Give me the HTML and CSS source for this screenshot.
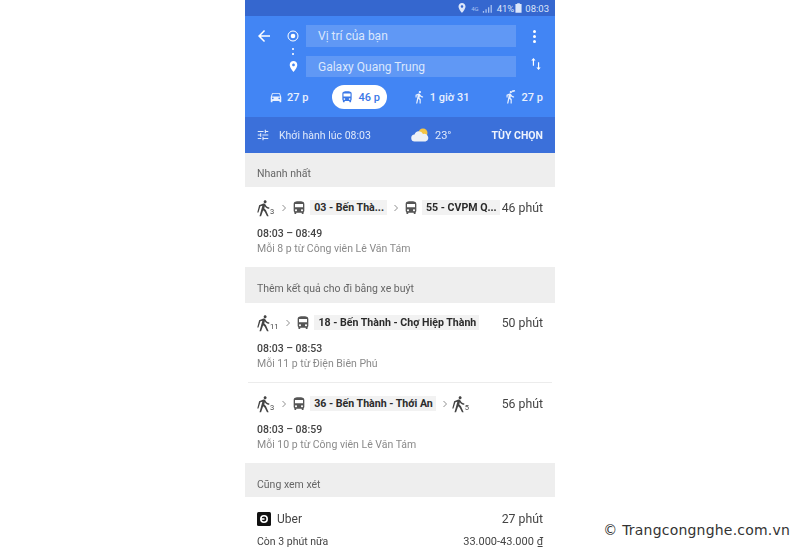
FILE: index.html
```html
<!DOCTYPE html>
<html lang="vi">
<head>
  <meta charset="UTF-8" />
  <title>Trang chỉ đường</title>
  <link rel="stylesheet" href="styles.css">
</head>
<body>

<svg class="defs" width="0" height="0">
  <symbol id="car" viewBox="0 0 24 24"><path d="M18.92 6.01C18.72 5.42 18.16 5 17.5 5h-11c-.66 0-1.21.42-1.42 1.01L3 12v8c0 .55.45 1 1 1h1c.55 0 1-.45 1-1v-1h12v1c0 .55.45 1 1 1h1c.55 0 1-.45 1-1v-8l-2.08-5.99zM6.5 16c-.83 0-1.5-.67-1.5-1.5S5.67 13 6.5 13s1.5.67 1.5 1.5S7.33 16 6.5 16zm11 0c-.83 0-1.5-.67-1.5-1.5s.67-1.5 1.5-1.5 1.5.67 1.5 1.5-.67 1.5-1.5 1.5zM5 11l1.500-4.500h11L19 11H5z"/></symbol>
  <symbol id="bus" viewBox="0 0 24 24"><path d="M4 16c0 .88.39 1.67 1 2.22V20c0 .55.45 1 1 1h1c.55 0 1-.45 1-1v-1h8v1c0 .55.45 1 1 1h1c.55 0 1-.45 1-1v-1.78c.61-.55 1-1.34 1-2.22V6c0-3.5-3.58-4-8-4s-8 .5-8 4v10zm3.500 1c-.83 0-1.500-.67-1.500-1.500S6.670 14 7.500 14s1.500.67 1.500 1.500S8.330 17 7.500 17zm9 0c-.83 0-1.500-.67-1.500-1.500s.67-1.500 1.500-1.500 1.500.67 1.500 1.500-.67 1.500-1.500 1.500zm1.500-6H6V6h12v5z"/></symbol>
  <symbol id="walk" viewBox="0 0 24 24"><path d="M13.5 5.5c1.1 0 2-.9 2-2s-.9-2-2-2-2 .9-2 2 .9 2 2 2zM9.800 8.900L7 23h2.100l1.800-8 2.100 2v6h2v-7.500l-2.100-2 .6-3C14.800 12 16.800 13 19 13v-2c-1.900 0-3.500-1-4.300-2.400l-1-1.600c-.4-.6-1-1-1.700-1-.3 0-.5.1-.8.1L6 8.300V13h2V9.600l1.800-.7"/></symbol>
  <symbol id="hike" viewBox="0 0 24 24"><path d="M13.5 5.500c1.100 0 2-.9 2-2s-.9-2-2-2-2 .9-2 2 .9 2 2 2zM9.800 8.900L6 23h2.100l2.800-8 2.100 2 3 6h2.200l-3.700-8.500-2.100-2 .6-3C14.800 12 16.800 13 19 13v-2c-1.900 0-3.500-1-4.300-2.400l-1-1.600c-.4-.6-1-1-1.700-1-.3 0-.5.1-.8.1L5.500 8.300 3 18h1.600l2.600-8.400 2.600-.7"/></symbol>
  <symbol id="place" viewBox="0 0 24 24"><path d="M12 2C8.130 2 5 5.130 5 9c0 5.250 7 13 7 13s7-7.750 7-13c0-3.870-3.130-7-7-7zm0 9.500c-1.380 0-2.500-1.120-2.500-2.500s1.120-2.500 2.500-2.500 2.500 1.120 2.500 2.500-1.120 2.500-2.500 2.500z"/></symbol>
  <symbol id="chevron" viewBox="0 0 8 10"><path d="M2 1l4 4-4 4" fill="none" stroke="currentColor" stroke-width="1.100"/></symbol>
</svg>

<div class="phone">
  <div class="statusbar">
    <svg class="ic-status" viewBox="0 0 24 24"><use href="#place"/></svg>
    <span class="net">4G</span>
    <svg class="signal" viewBox="0 0 14 10"><path d="M1 10h1.500V8H1zM4 10h1.500V6H4zM7 10h1.500V3.500H7zM10 10h1.500V1H10z"/></svg>
    <span>41%</span>
    <svg class="battery" viewBox="0 0 8 11"><path d="M2.500 0h3v1H7.500v10H.5V1h2z"/></svg>
    <span>08:03</span>
  </div>

  <div class="header">
    <div class="search-row">
      <svg class="back" viewBox="0 0 24 24"><path d="M20 11H7.830l5.590-5.590L12 4l-8 8 8 8 1.410-1.410L7.830 13H20v-2z"/></svg>
      <div class="marker">
        <svg class="origin" viewBox="0 0 12 12"><circle cx="6" cy="6" r="5" fill="none" stroke="#fff" stroke-width="1"/><circle cx="6" cy="6" r="2.300" fill="#fff"/></svg>
      </div>
      <div class="field">Vị trí của bạn</div>
      <div class="dots"><i></i><i></i><i></i></div>
    </div>
    <div class="connector"><i></i><i></i></div>
    <div class="search-row second">
      <div class="back-space"></div>
      <div class="marker">
        <svg class="pin" viewBox="0 0 24 24"><use href="#place"/></svg>
      </div>
      <div class="field">Galaxy Quang Trung</div>
      <svg class="swap" viewBox="0 0 14 16"><path d="M4 1L1.500 4H3.300v6h1.400V4H6.500zM10 15l2.500-3H10.700V6H9.300v6H7.500z"/></svg>
    </div>
    <div class="modes">
      <div class="mode m-car"><svg viewBox="0 0 24 24"><use href="#car"/></svg>27 p</div>
      <div class="mode m-bus active"><svg viewBox="0 0 24 24"><use href="#bus"/></svg>46 p</div>
      <div class="mode m-walk"><svg viewBox="0 0 24 24"><use href="#walk"/></svg>1 giờ 31</div>
      <div class="mode m-hail"><svg viewBox="0 0 24 24"><use href="#walk"/><path d="M15 1l5-1 1 2-5 2z"/></svg>27 p</div>
    </div>
  </div>

  <div class="depart">
    <svg class="tune" viewBox="0 0 24 24"><path d="M3 17v2h6v-2H3zM3 5v2h10V5H3zm10 16v-2h8v-2h-8v-2h-2v6h2zM7 9v2H3v2h4v2h2V9H7zm14 4v-2H11v2h10zm-6-4h2V7h4V5h-4V3h-2v6z"/></svg>
    <span class="depart-text">Khởi hành lúc 08:03</span>
    <svg class="weather" viewBox="0 0 18 14"><circle cx="12" cy="5" r="4.500" fill="#f6c544"/><path d="M4 13.500a3.500 3.500 0 0 1-.5-7A4.500 4.500 0 0 1 12 6a3.800 3.800 0 0 1 2.500 7.500z" fill="#eef1f6"/></svg>
    <span class="temp">23°</span>
    <span class="options">TÙY CHỌN</span>
  </div>

  <div class="label">Nhanh nhất</div>
  <div class="result">
    <div class="route">
      <svg class="ic-walk" viewBox="0 0 24 24"><use href="#hike"/></svg><sub>3</sub>
      <svg class="chev" viewBox="0 0 8 10"><use href="#chevron"/></svg>
      <svg class="ic-bus" viewBox="0 0 24 24"><use href="#bus"/></svg>
      <span class="line">03 - Bến Thà...</span>
      <svg class="chev" viewBox="0 0 8 10"><use href="#chevron"/></svg>
      <svg class="ic-bus" viewBox="0 0 24 24"><use href="#bus"/></svg>
      <span class="line last">55 - CVPM Q...</span>
      <span class="duration">46 phút</span>
    </div>
    <div class="times">08:03 – 08:49</div>
    <div class="freq">Mỗi 8 p từ Công viên Lê Văn Tám</div>
  </div>

  <div class="label tall low">Thêm kết quả cho đi bằng xe buýt</div>
  <div class="result divided">
    <div class="route">
      <svg class="ic-walk" viewBox="0 0 24 24"><use href="#hike"/></svg><sub>11</sub>
      <svg class="chev" viewBox="0 0 8 10"><use href="#chevron"/></svg>
      <svg class="ic-bus" viewBox="0 0 24 24"><use href="#bus"/></svg>
      <span class="line">18 - Bến Thành - Chợ Hiệp Thành</span>
      <span class="duration">50 phút</span>
    </div>
    <div class="times">08:03 – 08:53</div>
    <div class="freq">Mỗi 11 p từ Điện Biên Phú</div>
  </div>
  <div class="result">
    <div class="route">
      <svg class="ic-walk" viewBox="0 0 24 24"><use href="#hike"/></svg><sub>3</sub>
      <svg class="chev" viewBox="0 0 8 10"><use href="#chevron"/></svg>
      <svg class="ic-bus" viewBox="0 0 24 24"><use href="#bus"/></svg>
      <span class="line">36 - Bến Thành - Thới An</span>
      <svg class="chev" viewBox="0 0 8 10"><use href="#chevron"/></svg>
      <svg class="ic-walk" viewBox="0 0 24 24"><use href="#hike"/></svg><sub>5</sub>
      <span class="duration">56 phút</span>
    </div>
    <div class="times">08:03 – 08:59</div>
    <div class="freq">Mỗi 10 p từ Công viên Lê Văn Tám</div>
  </div>

  <div class="label low">Cũng xem xét</div>
  <div class="uber">
    <div class="uber-row">
      <svg class="uber-logo" viewBox="0 0 14 14"><rect width="14" height="14" rx="1.500" fill="#111"/><circle cx="7" cy="7" r="3.200" fill="none" stroke="#fff" stroke-width="1.600"/><path d="M4 6.200h3.500v1.600H4z" fill="#fff"/></svg>
      <span class="uber-name">Uber</span>
      <span class="duration">27 phút</span>
    </div>
    <div class="uber-row small">
      <span>Còn 3 phút nữa</span>
      <span class="price">33.000-43.000 ₫</span>
    </div>
  </div>
</div>

<div class="watermark">© Trangcongnghe.com.vn</div>

</body>
</html>
```

FILE: styles.css
```css
html, body {
  height: 100%;
}

body {
  margin: 0;
  background: #fff;
  font-family: Roboto, "Noto Sans", sans-serif;
  color: #333;
  overflow: hidden;
}

.defs {
  position: absolute;
}

svg {
  display: block;
  flex: none;
  fill: currentColor;
}

.phone {
  width: 310px;
  height: 548px;
  margin: 0 auto;
  overflow: hidden;
  filter: blur(0.4px);
}

/* status bar */
.statusbar {
  height: 16px;
  background: #3567cf;
  color: #dce6fa;
  display: flex;
  align-items: center;
  justify-content: flex-end;
  gap: 3px;
  padding-right: 6px;
  font-size: 9.5px;
}

.ic-status {
  width: 12px;
  height: 12px;
}

.net {
  font-size: 6px;
  color: #a9c2f2;
}

.signal {
  width: 12px;
  height: 9px;
  fill: #a9c2f2;
}

.battery {
  width: 7px;
  height: 10px;
  margin-left: -2px;
}

/* header */
.header {
  height: 101px;
  box-sizing: border-box;
  padding-top: 9px;
  background: #4285f4;
  color: #fff;
}

.search-row {
  display: flex;
  align-items: center;
  height: 22px;
}

.search-row.second {
  margin-top: 9px;
  height: 21px;
}

.back {
  width: 18px;
  height: 18px;
  margin-left: 10px;
}

.back-space {
  width: 18px;
  margin-left: 10px;
}

.marker {
  width: 12px;
  margin-left: 14px;
  margin-right: 7px;
  display: flex;
  justify-content: center;
}

.origin {
  width: 12px;
  height: 12px;
}

.pin {
  width: 13px;
  height: 13px;
}

.field {
  width: 198px;
  height: 100%;
  padding-left: 12px;
  background: rgba(255, 255, 255, 0.16);
  font-size: 12px;
  line-height: 22px;
  color: #dbe7fd;
}

.dots {
  margin-left: 17px;
  display: flex;
  flex-direction: column;
  gap: 2px;
}

.dots i {
  width: 3px;
  height: 3px;
  border-radius: 50%;
  background: #fff;
}

/* the .phone filter makes it the containing block */
.connector {
  position: absolute;
  top: 48px;
  left: 47px;
  display: flex;
  flex-direction: column;
  gap: 3px;
}

.connector i {
  width: 2px;
  height: 2px;
  background: #d5e3fc;
}

.swap {
  width: 12px;
  height: 16px;
  margin-left: 14px;
  margin-top: -5px;
}

.modes {
  display: flex;
  align-items: center;
  height: 24px;
  margin-top: 8px;
  font-size: 11px;
  font-weight: 500;
}

.mode {
  display: flex;
  align-items: center;
  gap: 4px;
  color: #e8f0fe;
}

.mode svg {
  width: 14px;
  height: 14px;
}

.m-car {
  margin-left: 24px;
}

.m-bus {
  margin-left: 24px;
}

.m-walk {
  margin-left: 25px;
}

.m-hail {
  margin-left: 34px;
}

.mode.active {
  height: 24px;
  padding: 0 7px 0 8px;
  background: #fff;
  border-radius: 12px;
  color: #3b78e7;
}

/* depart bar */
.depart {
  height: 36px;
  background: #3b70da;
  display: flex;
  align-items: center;
  color: #dfe9fb;
  font-size: 10.5px;
  box-shadow: 0 1px 1px rgba(0, 0, 0, 0.15);
}

.tune {
  width: 14px;
  height: 14px;
  margin-left: 11px;
}

.depart-text {
  margin-left: 9px;
  width: 132px;
}

.weather {
  width: 18px;
  height: 14px;
}

.temp {
  margin-left: 6px;
  font-size: 11px;
}

.options {
  margin-left: auto;
  margin-right: 12px;
  font-weight: 700;
  color: #eef3fd;
}

/* lists */
.label {
  height: 34px;
  box-sizing: border-box;
  padding-left: 12px;
  background: #eeeeee;
  color: #666;
  font-size: 10.5px;
  line-height: 42px;
}

.label.tall {
  height: 36px;
}

.label.low {
  line-height: 44px;
}

.result {
  height: 80px;
  box-sizing: border-box;
  padding: 12px 12px 0;
}

.divided {
  position: relative;
  height: 80px;
  padding-top: 11px;
}

.divided::after {
  content: "";
  position: absolute;
  left: 3px;
  right: 3px;
  bottom: 0;
  height: 1px;
  background: #ececec;
}

.route {
  display: flex;
  align-items: center;
  height: 17px;
  font-size: 12px;
  color: #333;
}

.ic-walk {
  width: 18px;
  height: 18px;
  margin-left: -2px;
  color: #444;
}

.route sub {
  align-self: flex-end;
  margin-left: -3px;
  margin-right: 7px;
  font-size: 7.5px;
  line-height: 8px;
  color: #444;
}

.chev {
  width: 6px;
  height: 8px;
  color: #777;
  margin-right: 4px;
}

.ic-bus {
  width: 16px;
  height: 16px;
  color: #555;
}

.line {
  margin: 0 6px 0 3px;
  padding: 1px 3px 1px 4px;
  background: #f2f2f2;
  font-size: 10.6px;
  font-weight: 700;
  color: #2b2b2b;
  white-space: nowrap;
}

.line.last {
  margin-right: 0;
}

.duration {
  margin-left: auto;
  font-size: 12.3px;
  color: #444;
  white-space: nowrap;
}

.times {
  margin-top: 11px;
  font-size: 10.5px;
  font-weight: 500;
  color: #444;
}

.freq {
  margin-top: 2px;
  font-size: 10.5px;
  color: #8a8a8a;
}

/* uber */
.uber {
  padding: 14px 12px 0;
}

.uber-row {
  display: flex;
  align-items: center;
  height: 16px;
}

.uber-row.small {
  margin-top: 6px;
  justify-content: space-between;
  font-size: 10.5px;
  color: #444;
}

.uber-logo {
  width: 14px;
  height: 14px;
}

.uber-name {
  margin-left: 6px;
  font-size: 12px;
  color: #444;
}

.price {
  font-size: 11px;
}

.watermark {
  position: absolute;
  right: 10px;
  top: 522px;
  font-family: "DejaVu Sans", sans-serif;
  font-size: 14px;
  color: #333;
  letter-spacing: 0.2px;
}
```
